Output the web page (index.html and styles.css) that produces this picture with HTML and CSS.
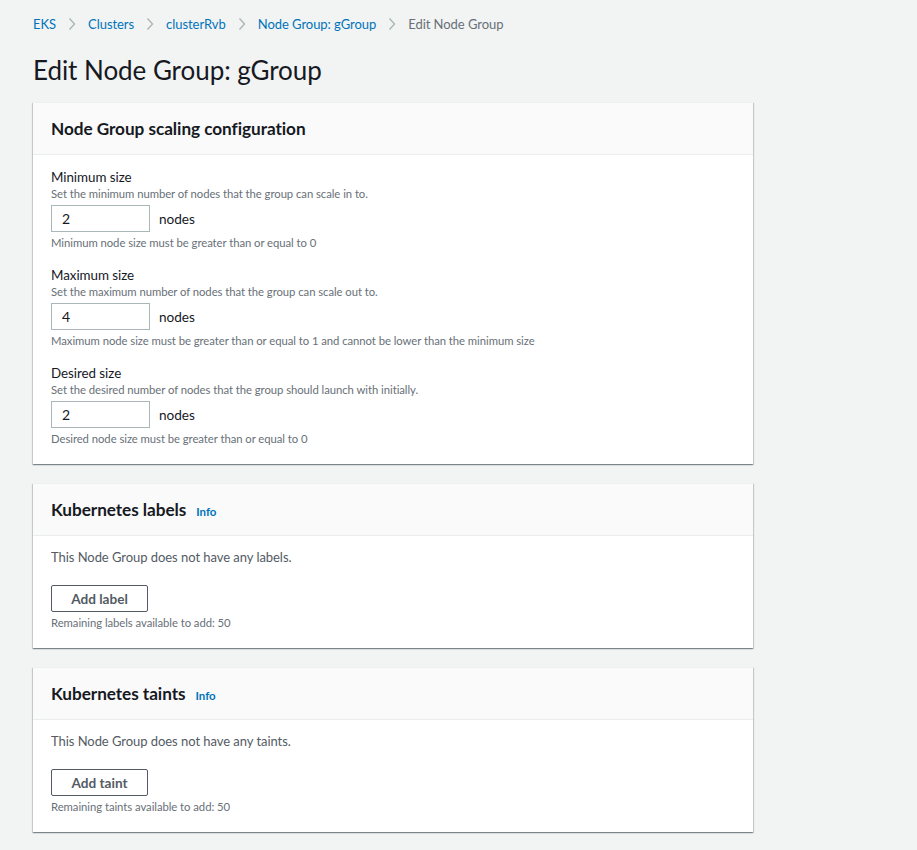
FILE: index.html
```html
<!DOCTYPE html>
<html lang="en">
<head>
<meta charset="utf-8">
<title>Edit Node Group: gGroup</title>
<link rel="stylesheet" href="styles.css">
</head>
<body>
<div class="page">
  <nav class="crumbs">
    <a class="crumb">EKS</a>
    <svg class="chev" viewBox="0 0 8 14" width="8" height="14"><path d="M1.5 1.5 L6.5 7 L1.5 12.5" fill="none" stroke="#aab7b8" stroke-width="1.4"/></svg>
    <a class="crumb">Clusters</a>
    <svg class="chev" viewBox="0 0 8 14" width="8" height="14"><path d="M1.5 1.5 L6.5 7 L1.5 12.5" fill="none" stroke="#aab7b8" stroke-width="1.4"/></svg>
    <a class="crumb">clusterRvb</a>
    <svg class="chev" viewBox="0 0 8 14" width="8" height="14"><path d="M1.5 1.5 L6.5 7 L1.5 12.5" fill="none" stroke="#aab7b8" stroke-width="1.4"/></svg>
    <a class="crumb">Node Group: gGroup</a>
    <svg class="chev" viewBox="0 0 8 14" width="8" height="14"><path d="M1.5 1.5 L6.5 7 L1.5 12.5" fill="none" stroke="#aab7b8" stroke-width="1.4"/></svg>
    <span class="crumb current">Edit Node Group</span>
  </nav>

  <h1 class="title">Edit Node Group: gGroup</h1>

  <section class="panel">
    <header class="panel-head"><h2>Node Group scaling configuration</h2></header>
    <div class="panel-body fields">
      <div class="field">
        <div class="label">Minimum size</div>
        <div class="desc">Set the minimum number of nodes that the group can scale in to.</div>
        <div class="input-row"><div class="input">2</div><span class="unit">nodes</span></div>
        <div class="hint">Minimum node size must be greater than or equal to 0</div>
      </div>
      <div class="field">
        <div class="label">Maximum size</div>
        <div class="desc">Set the maximum number of nodes that the group can scale out to.</div>
        <div class="input-row"><div class="input">4</div><span class="unit">nodes</span></div>
        <div class="hint">Maximum node size must be greater than or equal to 1 and cannot be lower than the minimum size</div>
      </div>
      <div class="field">
        <div class="label">Desired size</div>
        <div class="desc">Set the desired number of nodes that the group should launch with initially.</div>
        <div class="input-row"><div class="input">2</div><span class="unit">nodes</span></div>
        <div class="hint">Desired node size must be greater than or equal to 0</div>
      </div>
    </div>
  </section>

  <section class="panel">
    <header class="panel-head"><h2>Kubernetes labels</h2><a class="info">Info</a></header>
    <div class="panel-body">
      <p class="empty">This Node Group does not have any labels.</p>
      <button class="btn">Add label</button>
      <div class="hint">Remaining labels available to add: 50</div>
    </div>
  </section>

  <section class="panel">
    <header class="panel-head"><h2>Kubernetes taints</h2><a class="info">Info</a></header>
    <div class="panel-body">
      <p class="empty">This Node Group does not have any taints.</p>
      <button class="btn">Add taint</button>
      <div class="hint">Remaining taints available to add: 50</div>
    </div>
  </section>
</div>
</body>
</html>
```

FILE: styles.css
```css
* { box-sizing: border-box; }
html, body { margin: 0; padding: 0; }
body {
  background: #f2f3f3;
  font-family: "Lato", "Liberation Sans", sans-serif;
  color: #16191f;
  font-size: 13.2px;
  letter-spacing: -0.05px;
}
.page {
  width: 720px;
  margin-left: 33px;
  padding-top: 15px;
  padding-bottom: 20px;
  display: flex;
  flex-direction: column;
}
.crumbs {
  display: flex;
  align-items: center;
  height: 18px;
  gap: 12px;
}
.crumb {
  font-size: 13px;
  line-height: 18px;
  color: #0073bb;
}
.crumb.current { color: #687078; }
.chev { display: block; width: 8px; }
.title {
  margin: 20px 0 0;
  font-size: 26px;
  line-height: 34px;
  font-weight: 400;
  color: #16191f;
}
.panel {
  background: #fff;
  margin-top: 15px;
  box-shadow: 0 1px 1px 0 rgba(0,28,36,.3), 1px 1px 1px 0 rgba(0,28,36,.15), -1px 1px 1px 0 rgba(0,28,36,.15);
  border-top: 1px solid #eef0f0;
}
.panel + .panel { margin-top: 19px; }
.panel-head {
  height: 52px;
  background: #fafafa;
  border-bottom: 1px solid #eaeded;
  padding: 0 18px;
  display: flex;
  align-items: center;
}
.panel-head h2 {
  margin: 0;
  font-size: 17.2px;
  font-weight: 700;
  color: #16191f;
}
.info {
  margin-left: 10px;
  margin-top: 3px;
  font-size: 11.5px;
  font-weight: 700;
  color: #0073bb;
}
.panel-body {
  padding: 12px 18px 17px;
  display: flex;
  flex-direction: column;
  align-items: flex-start;
}
.fields { padding-top: 13px; gap: 15px; }
.field { display: flex; flex-direction: column; }
.label { font-size: 13.4px; line-height: 18px; color: #16191f; }
.desc { font-size: 11.3px; line-height: 16px; color: #687078; }
.input-row {
  display: flex;
  align-items: center;
  margin-top: 3px;
  gap: 9px;
}
.input {
  width: 99px;
  height: 27px;
  border: 1px solid #aab7b8;
  padding: 0 10px;
  font-size: 14px;
  line-height: 25px;
  color: #16191f;
  background: #fff;
}
.unit { font-size: 13.6px; color: #16191f; }
.hint {
  margin-top: 3px;
  font-size: 11.3px;
  line-height: 16px;
  color: #687078;
}
.empty {
  margin: 0;
  font-size: 13px;
  line-height: 18px;
  color: #545b64;
}
.btn {
  margin-top: 19px;
  width: 97px;
  height: 27px;
  border: 1px solid #545b64;
  border-radius: 2px;
  background: #fff;
  font-family: inherit;
  font-size: 13.6px;
  font-weight: 700;
  color: #545b64;
  padding: 0;
}
```
